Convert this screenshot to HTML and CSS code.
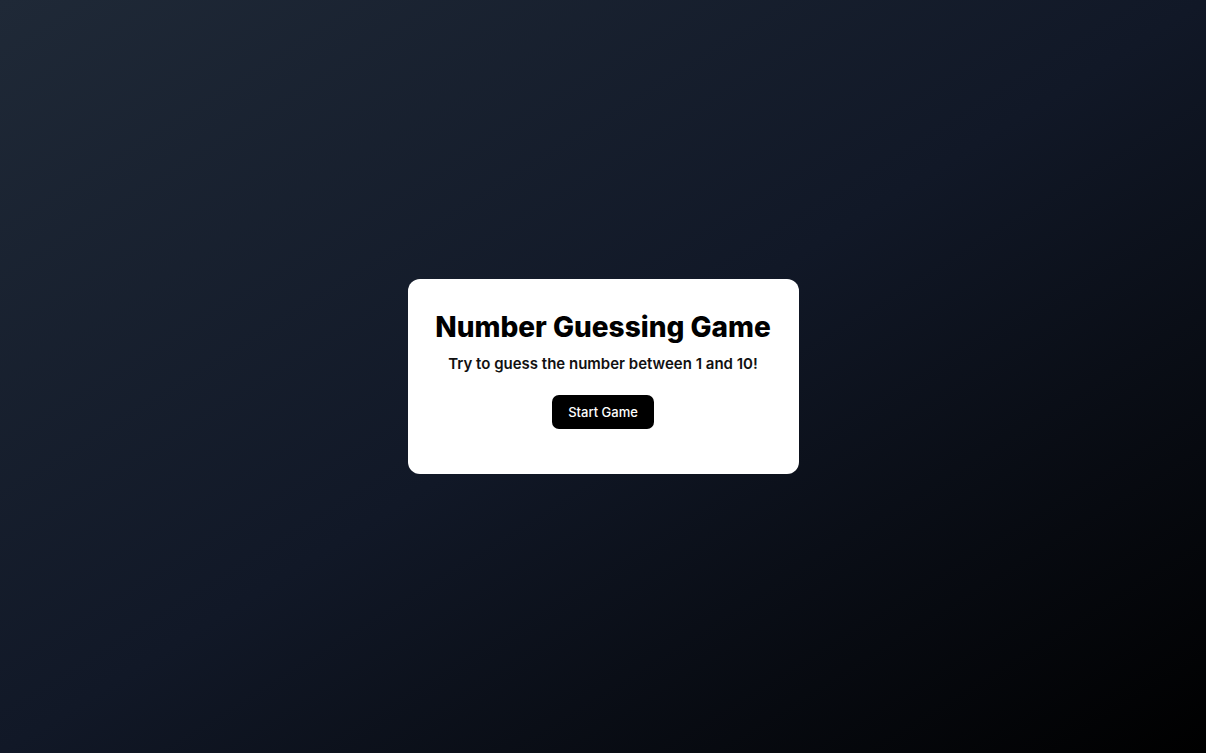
FILE: index.html
```html
<!DOCTYPE html>
<html lang="en">
<head>
<meta charset="utf-8">
<title>Number Guessing Game</title>
<link rel="stylesheet" href="styles.css">
</head>
<body>
<main class="page">
  <section class="card">
    <h1 class="title">Number Guessing Game</h1>
    <p class="subtitle">Try to guess the number between 1 and 10!</p>
    <button class="start-btn" type="button">Start Game</button>
  </section>
</main>
</body>
</html>
```

FILE: styles.css
```css
* { box-sizing: border-box; }
html, body { margin: 0; padding: 0; }
body {
  font-family: Inter, "Noto Sans", sans-serif;
  background: linear-gradient(to bottom right, #1f2937, #111827, #000000);
  min-height: 100vh;
}
.page {
  min-height: 100vh;
  display: flex;
  align-items: center;
  justify-content: center;
}
.card {
  width: 391px;
  background: #ffffff;
  border-radius: 12px;
  padding: 30px 16px 45px;
  display: flex;
  flex-direction: column;
  align-items: center;
  text-align: center;
}
.title {
  margin: 0;
  font-size: 28px;
  line-height: 36px;
  font-weight: 800;
  color: #000;
  white-space: nowrap;
}
.subtitle {
  margin: 8px 0 0;
  font-size: 15px;
  line-height: 22px;
  font-weight: 600;
  color: #111;
}
.start-btn {
  margin-top: 20px;
  font-family: inherit;
  font-size: 13px;
  font-weight: 500;
  color: #fff;
  background: #000;
  border: none;
  border-radius: 7px;
  height: 34px;
  padding: 0 16px;
}
```
